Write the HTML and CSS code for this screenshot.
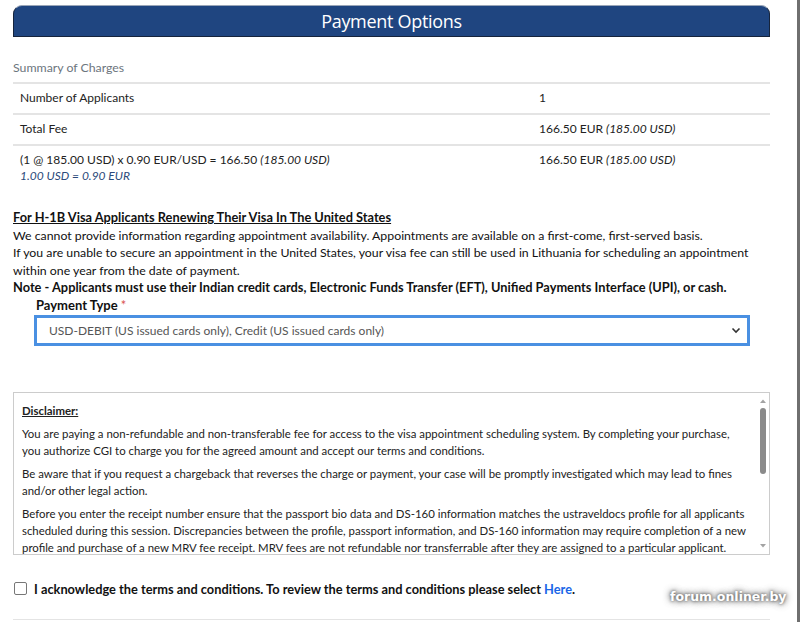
FILE: index.html
```html
<!DOCTYPE html>
<html>
<head>
<meta charset="utf-8">
<link rel="stylesheet" href="styles.css">
</head>
<body>
<div class="window">
  <div class="page">
    <div class="header">Payment Options</div>

    <div class="summary-title">Summary of Charges</div>
    <table class="charges">
      <tr>
        <td class="c1">Number of Applicants</td>
        <td class="c2">1</td>
      </tr>
      <tr>
        <td class="c1">Total Fee</td>
        <td class="c2">166.50 EUR <i>(185.00 USD)</i></td>
      </tr>
      <tr class="last">
        <td class="c1">(1 @ 185.00 USD) x 0.90 EUR/USD = 166.50 <i>(185.00 USD)</i><br><i class="rate">1.00 USD = 0.90 EUR</i></td>
        <td class="c2">166.50 EUR <i>(185.00 USD)</i></td>
      </tr>
    </table>

    <div class="notice">
      <div class="notice-title">For H-1B Visa Applicants Renewing Their Visa In The United States</div>
      <div>We cannot provide information regarding appointment availability. Appointments are available on a first-come, first-served basis.</div>
      <div>If you are unable to secure an appointment in the United States, your visa fee can still be used in Lithuania for scheduling an appointment within one year from the date of payment.</div>
      <div class="note">Note - Applicants must use their Indian credit cards, Electronic Funds Transfer (EFT), Unified Payments Interface (UPI), or cash.</div>
    </div>

    <div class="field">
      <label class="field-label">Payment Type <span class="req">*</span></label>
      <div class="select">
        <span class="select-text">USD-DEBIT (US issued cards only), Credit (US issued cards only)</span>
        <svg class="chev" width="10" height="7" viewBox="0 0 10 7"><path d="M1.5 1.5 L5 5 L8.5 1.5" fill="none" stroke="#333" stroke-width="1.6"/></svg>
      </div>
    </div>

    <div class="disclaimer">
      <div class="d-content">
        <div class="d-title">Disclaimer:</div>
        <p>You are paying a non-refundable and non-transferable fee for access to the visa appointment scheduling system. By completing your purchase, you authorize CGI to charge you for the agreed amount and accept our terms and conditions.</p>
        <p>Be aware that if you request a chargeback that reverses the charge or payment, your case will be promptly investigated which may lead to fines and/or other legal action.</p>
        <p>Before you enter the receipt number ensure that the passport bio data and DS-160 information matches the ustraveldocs profile for all applicants scheduled during this session. Discrepancies between the profile, passport information, and DS-160 information may require completion of a new profile and purchase of a new MRV fee receipt. MRV fees are not refundable nor transferrable after they are assigned to a particular applicant.</p>
      </div>
      <div class="d-scroll">
        <svg class="arrow" width="12" height="12" viewBox="0 0 12 12"><path d="M3 8 L6 4.5 L9 8 Z" fill="#a3a3a3"/></svg>
        <div class="track"><div class="thumb"></div></div>
        <svg class="arrow" width="12" height="12" viewBox="0 0 12 12"><path d="M3 4 L6 7.5 L9 4 Z" fill="#a3a3a3"/></svg>
      </div>
    </div>

    <div class="ack">
      <span class="checkbox"></span>
      <span class="ack-text">I acknowledge the terms and conditions. To review the terms and conditions please select <a class="link">Here</a>.</span>
    </div>
    <div class="rule"></div>
  </div>
  <div class="watermark">forum.onliner.by</div>
</div>
</body>
</html>
```

FILE: styles.css
```css
html, body {
  margin: 0;
  padding: 0;
  background: #fff;
}
body {
  font-family: Lato, "Open Sans", sans-serif;
  color: #212529;
  font-size: 12.3px;
}
.window {
  position: relative;
  width: 797px;
  height: 622px;
  border-right: 3px solid #6f6f6f;
  overflow: hidden;
}
.page {
  width: 757px;
  padding-left: 13px;
}
.header {
  margin-top: 5px;
  height: 30px;
  background: #1f4580;
  border: 1px solid #16243c;
  border-top-color: #9aa6b8;
  border-radius: 9px 9px 0 0;
  color: #fff;
  text-align: center;
  font-family: "Open Sans", sans-serif;
  font-size: 18px;
  line-height: 30px;
  letter-spacing: -0.3px;
}
.summary-title {
  margin-top: 22px;
  color: #6c757d;
  font-size: 12.3px;
  line-height: 17px;
  height: 23px;
}
.charges {
  width: 100%;
  border-collapse: collapse;
  font-size: 12px;
  color: #222;
}
.charges td {
  border-top: 2px solid #e4e4e4;
  padding: 6px 7px 7px;
  line-height: 16px;
  vertical-align: top;
  height: 16px;
}
.charges td.c1 {
  width: 505px;
}
.charges tr.last td {
  padding-top: 6px;
}
.charges .rate {
  color: #2c4a7a;
}
.notice {
  margin-top: 18px;
  font-size: 12.3px;
  line-height: 17.5px;
  color: #111;
}
.notice-title {
  font-weight: 700;
  text-decoration: underline;
  font-size: 12.8px;
}
.note {
  font-weight: 700;
  font-size: 12.8px;
}
.field {
  padding-left: 21px;
  width: 716px;
}
.field-label {
  display: block;
  padding-left: 2px;
  font-weight: 700;
  font-size: 13px;
  line-height: 17px;
  color: #111;
}
.req {
  color: #d9534f;
  font-weight: 400;
}
.select {
  margin-top: 1px;
  height: 25px;
  border: 3px solid #4a90e2;
  display: flex;
  align-items: center;
  justify-content: space-between;
  padding: 0 6px 0 12px;
}
.select-text {
  color: #555;
  font-size: 12px;
}
.chev {
  display: block;
}
.disclaimer {
  margin-top: 46px;
  height: 161px;
  border: 1px solid #ccc;
  display: flex;
}
.d-content {
  flex: 1;
  overflow: hidden;
  padding: 4px 11px 0 8px;
  font-size: 11.4px;
  line-height: 17px;
  color: #222;
}
.d-scroll {
  width: 12px;
  display: flex;
  flex-direction: column;
  align-items: center;
  padding: 2px 0;
}
.arrow {
  display: block;
  flex: none;
}
.track {
  flex: 1;
  width: 12px;
  display: flex;
  justify-content: center;
  padding-top: 1px;
}
.thumb {
  width: 6px;
  height: 66px;
  border-radius: 3px;
  background: #8a8a8a;
}
.d-title {
  font-weight: 700;
  text-decoration: underline;
  margin-top: 5px;
  margin-bottom: 6px;
}
.d-content p {
  margin: 0 0 6px;
}
.ack {
  margin-top: 26px;
  display: flex;
  align-items: center;
  gap: 7px;
  padding-left: 1px;
}
.checkbox {
  width: 11px;
  height: 11px;
  border: 1px solid #777;
  border-radius: 2px;
  background: #fff;
}
.ack-text {
  font-weight: 700;
  font-size: 12.8px;
  color: #111;
}
.link {
  color: #1a66e8;
}
.rule {
  margin-top: 22px;
  border-top: 1px solid #e4e4e4;
}
.watermark {
  position: absolute;
  left: 670px;
  top: 589px;
  color: #fff;
  font-family: "DejaVu Sans", sans-serif;
  font-weight: 700;
  font-size: 12.5px;
  text-shadow: 0 0 3px #555, 0 0 6px #777, 0 0 8px #999;
}
```
